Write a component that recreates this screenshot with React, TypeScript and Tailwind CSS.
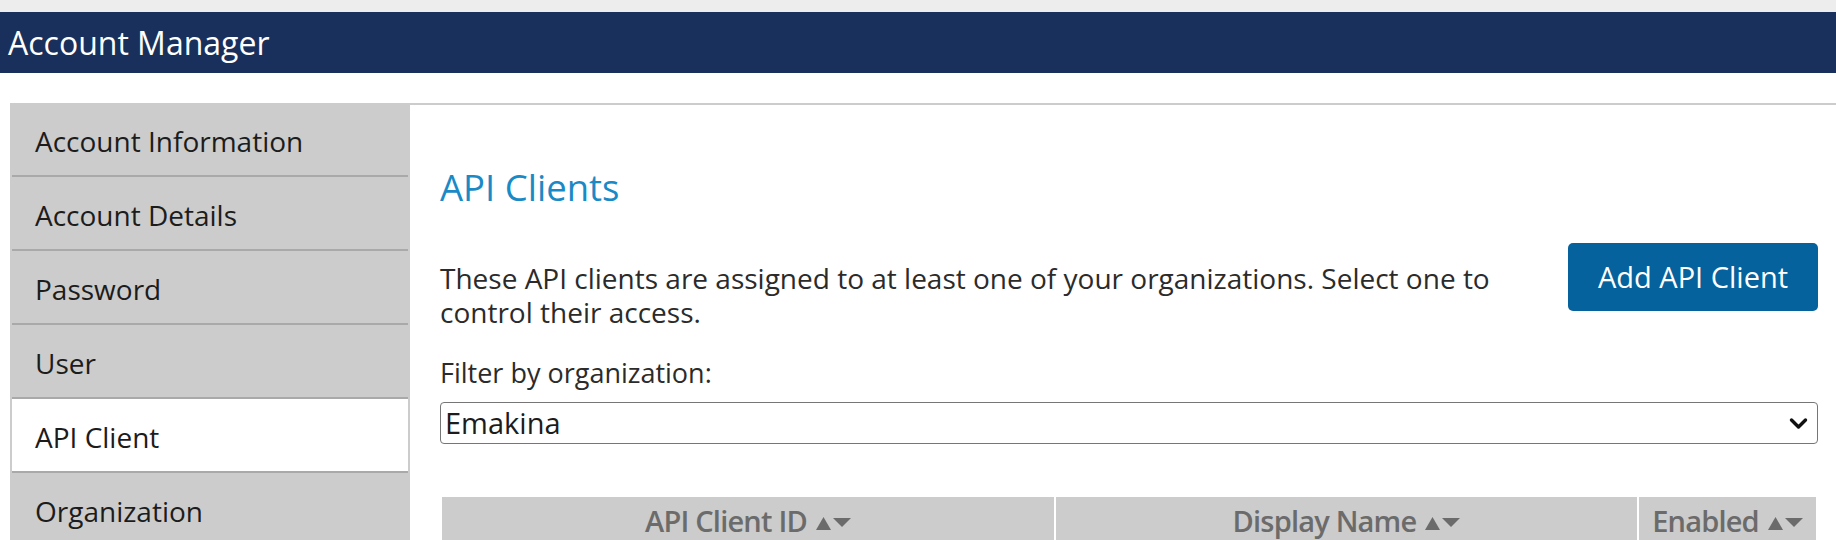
import React from "react";

const navItems = [
  "Account Information",
  "Account Details",
  "Password",
  "User",
  "API Client",
  "Organization",
];

function SortArrows() {
  return (
    <span className="ml-[8px] inline-flex items-center gap-[1px] pt-[3px]">
      <svg width="17" height="16" viewBox="0 0 17 16">
        <polygon points="8.5,2 16,15 1,15" fill="#6b6b6b" />
      </svg>
      <svg width="18" height="11" viewBox="0 0 18 11">
        <polygon points="0,1 18,1 9,10" fill="#6b6b6b" />
      </svg>
    </span>
  );
}

function HeaderCell({ label, className }: { label: string; className: string }) {
  return (
    <div className={"h-[62px] bg-[#cccccc] flex items-start justify-center pt-[6px] " + className}>
      <div className="flex items-center h-[36px] text-[29px] leading-[36px] font-semibold text-[#6b6b6b] tracking-[-0.8px]">
        <span>{label}</span>
        <SortArrows />
      </div>
    </div>
  );
}

export default function App() {
  return (
    <div
      className="w-[1836px] h-[540px] overflow-hidden bg-white"
      style={{ fontFamily: '"Open Sans", "Noto Sans", sans-serif' }}
    >
      <div className="h-[12px] bg-[#ededed]" />
      <div className="h-[61px] bg-[#18305b] flex items-center pl-[8px]">
        <span className="text-white text-[32px] leading-[40px]">Account Manager</span>
      </div>
      <div className="h-[30px]" />
      <div className="flex pl-[10px]">
        {/* Sidebar */}
        <div className="w-[400px] bg-[#cccccc] px-[2px] flex flex-col shrink-0">
          {navItems.map((item) => (
            <div
              key={item}
              className={
                "h-[74px] border-b-2 border-[#a9a9a9] flex items-center pl-[23px] pt-[4px] text-[28px] leading-[36px] text-[#1c1c1c] " +
                (item === "API Client" ? "bg-white" : "bg-[#cccccc]")
              }
            >
              {item}
            </div>
          ))}
        </div>
        {/* Main */}
        <div className="flex-1 border-t-2 border-[#cccccc] pl-[30px] pr-[18px] pt-[60px]">
          <h1 className="text-[36.5px] leading-[44px] text-[#1a8ac6]">API Clients</h1>
          <div className="flex items-start mt-[34px]">
            <p className="flex-1 mt-[18px] pr-[60px] text-[28px] leading-[34px] text-[#2b2b2b]">
              These API clients are assigned to at least one of your organizations. Select one to
              control their access.
            </p>
            <button className="w-[250px] h-[68px] rounded-[5px] bg-[#05629c] text-white text-[29px] leading-[36px] shrink-0">
              Add API Client
            </button>
          </div>
          <div className="mt-[28px] text-[27px] leading-[32px] text-[#2b2b2b]">
            Filter by organization:
          </div>
          <div className="mt-[13px] h-[42px] border border-[#767676] rounded-[4px] flex items-center justify-between pl-[4px] pr-[9px]">
            <span className="text-[29px] leading-[36px] text-[#1c1c1c]">Emakina</span>
            <svg width="19" height="13" viewBox="0 0 19 13">
              <polyline
                points="2.5,3 9.5,10 16.5,3"
                fill="none"
                stroke="#111"
                strokeWidth="3.4"
                strokeLinecap="round"
                strokeLinejoin="round"
              />
            </svg>
          </div>
          <div className="mt-[53px] flex gap-[2px] px-[2px]">
            <HeaderCell label="API Client ID" className="w-[612px]" />
            <HeaderCell label="Display Name" className="w-[581px]" />
            <HeaderCell label="Enabled" className="flex-1" />
          </div>
        </div>
      </div>
    </div>
  );
}
